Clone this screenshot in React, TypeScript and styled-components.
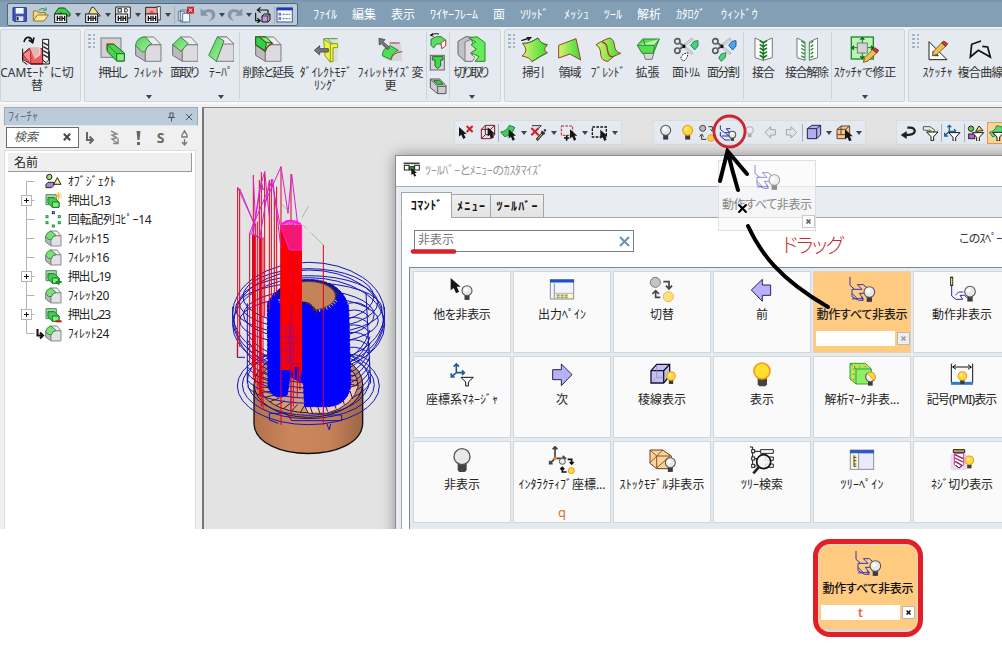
import React from 'react';
import styled, { createGlobalStyle } from 'styled-components';

const Global = createGlobalStyle`
  * { box-sizing: border-box; }
  body { margin: 0; background: #fff; overflow: hidden;
    font-family: "Noto Sans", "Noto Sans CJK JP", sans-serif; font-size: 12px; color: #222; }
  svg { display: block; flex: none; }
`;

/* ---------- text ---------- */
const isHalfKana = (c: string) => c >= '\uff61' && c <= '\uff9f';
const isHiragana = (c: string) => c >= '\u3041' && c <= '\u309f';
const advance = (c: string) =>
  isHalfKana(c) ? 0.5 : c === '.' ? 0.27 : c < '\u0100' ? 0.58 : isHiragana(c) ? 0.88 : 1;
const natural = (t: string, size: number) => [...t].reduce((n, c) => n + advance(c) * size, 0);

const TextSpan = styled.span<{ $ls: number; $size: number }>`
  display: block;
  white-space: pre;
  font-size: ${(p) => p.$size}px;
  font-feature-settings: "palt";
  letter-spacing: ${(p) => p.$ls}px;
  margin-right: ${(p) => -p.$ls}px;
  line-height: 13px;
`;
const Txt = ({ t, w, size = 12 }: { t: string; w?: number; size?: number }) => {
  const ls = w ? (w - natural(t, size)) / Math.max(1, t.length - 1) : 0;
  return <TextSpan $size={size} $ls={Math.round(ls * 100) / 100}>{t}</TextSpan>;
};

/* ---------- icons: drawn on a grid of three units per pixel ---------- */
type Box = [number, number, number, number];
const G = ({ v, children }: { v: Box; children: React.ReactNode }) => (
  <svg width={v[2] / 3} height={v[3] / 3} viewBox={v.join(' ')} fill="none" stroke="#222" strokeWidth={3}>
    {children}
  </svg>
);
const Bulb = ({ x, y, r = 15, lit, stroke }: { x: number; y: number; r?: number; lit?: boolean; stroke?: string }) => (
  <g>
    <rect x={x - r * 0.5} y={y + r * 0.8} width={r} height={r * 1.05} fill="#3c3c3c" stroke="none" />
    <circle cx={x} cy={y} r={r} fill={lit ? '#ffd83c' : '#e9e9ea'} stroke={stroke || (lit ? '#ee9a28' : '#555')} strokeWidth={3.2} />
    <circle cx={x - r * 0.25} cy={y - r * 0.25} r={r * 0.4} fill={lit ? '#ffec70' : '#fff'} stroke="none" />
  </g>
);
const Cursor = ({ x, y, s = 1 }: { x: number; y: number; s?: number }) => (
  <path transform={`translate(${x} ${y}) scale(${s})`} d="M0 0V32L8 26L14 40L22 36L16 23H26Z" fill="#161616" stroke="none" />
);
const DownArrow = () => (
  <svg width="6" height="4" viewBox="0 0 6 4"><path d="M0 0H6L3 4Z" fill="#3a4652" /></svg>
);
const Funnel = ({ x, y }: { x: number; y: number }) => (
  <path d={`M${x} ${y}h34l-13 14v12h-8v-12Z`} fill="#fff" stroke="#111" />
);
const Nc = () => (
  <g>
    <rect x="2" y="24" width="36" height="26" fill="#fff" stroke="#111" />
    <path d="M10 29v16M10 37h8M18 29v16M24 29v16M24 37h8M32 29v16" stroke="#111" strokeWidth="4" />
  </g>
);
const Motion = ({ ghost }: { ghost?: boolean }) => (
  <G v={[0, 0, 84, 84]}>
    <g opacity={ghost ? 0.55 : 1}>
      <path d="M6 3V28L20 40M20 40L12 40V52L28 68L12 69M20 40H42L28 26H46L60 38M28 68H46L34 52H50M12 52V62L32 73H46L40 62" stroke="#3535b4" strokeWidth="3" />
      <Bulb x={64} y={48} r={16} />
    </g>
  </G>
);
const MotionSmall = () => (
  <G v={[0, 0, 54, 54]}>
    <path d="M4 4V16L16 26M4 24V36L18 48H32M16 26H32L22 14H34M8 36H30L20 28" stroke="#2929a6" />
    <Bulb x={40} y={32} r={10} />
  </G>
);
const SolidCube = ({ kind }: { kind: 'fillet' | 'chamfer' | 'taper' | 'remove' }) => (
  <G v={[0, 0, 80, 80]}>
    <defs>
      <linearGradient id={`cube${kind}`} x1="0" y1="0" x2="1" y2="1"><stop offset="0" stopColor="#52cf58" /><stop offset="1" stopColor="#a6f29c" /></linearGradient>
    </defs>
    {kind === 'taper' ? (
      <>
        <path d="M28 3H56L78 24V76H24L46 22Z" fill="#dddbdf" stroke="#7b7d81" />
        <path d="M28 3H56L78 24H46Z" fill="#ededef" stroke="#7b7d81" />
        <path d="M28 3L48 14L25 76L2 58Z" fill="url(#cubetaper)" stroke="#3a8a46" />
      </>
    ) : (
      <>
        <path d="M2 26L31 46V76L2 58Z" fill="#bcbabe" stroke="#6c6e72" />
        <path d="M31 46L36 33L48 26H78V76H31Z" fill="#dddbdf" stroke="#7b7d81" />
        <path d="M26 3H56L78 26H48Z" fill="#ededef" stroke="#7b7d81" />
        {kind === 'fillet' && <path d="M2 29Q4 7 24 3H32L50 24Q34 28 31 46L22 48Z" fill="url(#cubefillet)" stroke="#36884a" />}
        {kind === 'chamfer' && <path d="M2 26L26 3L48 22L27 46Z" fill="url(#cubechamfer)" stroke="#36884a" />}
        {kind === 'remove' && (
          <>
            <path d="M2 3H28L52 22Q36 28 31 46L2 26Z" fill="#a6e89a" stroke="#8c3a28" strokeWidth="4" />
            <path d="M2 3H14L34 22L30 44L2 26Z" fill="#38cf42" stroke="#1c5a22" />
            <path d="M14 3H34L50 20H34Z" fill="#80ea78" stroke="#1c5a22" />
          </>
        )}
      </>
    )}
  </G>
);
const Extrude = () => (
  <G v={[0, 0, 76, 76]}>
    <rect x="3" y="3" width="60" height="58" fill="#d3d1d5" stroke="#7d7f85" />
    <path d="M20 40V20H42" stroke="#ef5a42" />
    <path d="M22 22H42L73 48V72H50L22 44Z" fill="#4ad44a" stroke="#1c6a24" />
    <path d="M50 50H73V72H50Z" fill="#86f080" stroke="#1c6a24" />
    <path d="M22 22L50 50" stroke="#1c6a24" strokeWidth="2" />
  </G>
);
const CamSwitch = () => (
  <G v={[66, 98, 90, 94]}>
    <path d="M68 158L86 142H128V188H92L68 174Z" fill="#f4595c" stroke="#7c1f28" />
    <path d="M68 158L92 188V144Z" fill="#fb8f90" stroke="#a2333b" />
    <path d="M88 136H120V160L104 172" fill="#e3b7b4" stroke="#eee" />
    <path d="M68 142V180L82 190M148 150V188H92" stroke="#111" />
    <path d="M128 114H146V176L138 184L128 176Z" fill="#f8f8f8" stroke="#111" />
    <path d="M130 124l14 8M130 136l14 8M130 148l14 8M130 160l14 8" stroke="#222" strokeWidth="4" />
    <path d="M72 122C76 104 92 104 96 118M86 116L98 124L102 108" stroke="#111" strokeWidth="5" />
  </G>
);
const DirectModel = () => (
  <G v={[252, 106, 78, 78]}>
    <path d="M286 114L300 110H326V182H302L288 160Z" fill="#deded9" stroke="none" />
    <path d="M284 112L304 126V182L288 162ZM304 126H326V138H312V180H302" fill="#edf24b" stroke="#86a00c" />
    <path d="M284 111H326M296 112L310 126" stroke="#3fa834" />
    <path d="M256 146L272 132V141H298V151H272V160Z" fill="#777" stroke="#555" />
  </G>
);
const FilletSize = () => (
  <G v={[445, 110, 78, 76]}>
    <path d="M462 144L486 126H512L518 182H478L458 170Z" fill="#d6d5d8" stroke="none" />
    <path d="M458 166Q458 144 482 136L506 150Q488 156 484 178Z" fill="#4fdc57" stroke="#2c8838" />
    <path d="M484 178Q488 156 518 154M480 128H510" stroke="#8c4030" />
    <path d="M448 114L466 118L460 124L480 142L474 148L455 130L449 134Z" fill="#777" stroke="#555" />
  </G>
);
const Ring = () => (
  <G v={[600, 96, 52, 52]}>
    <path d="M606 118L622 110H636L650 120V136L640 146L636 132H622L614 144L606 136Z" fill="#5edd62" stroke="#1e8433" />
    <path d="M636 128L650 120V138L638 146Z" fill="#fff" stroke="#d33a35" />
    <path d="M604 106Q618 98 630 102M612 100L604 106L614 109" stroke="#111" />
  </G>
);
const Hole = () => (
  <G v={[602, 166, 52, 52]}>
    <rect x="606" y="170" width="42" height="44" fill="#d4d3d6" stroke="#66696c" />
    <path d="M612 174H644V184H637V202L628 210L620 202V184H612Z" fill="#4ad44f" stroke="#167127" />
  </G>
);
const Pocket = () => (
  <G v={[600, 236, 54, 54]}>
    <path d="M604 242H632L651 262V286H626L604 268Z" fill="#cccbd0" stroke="#54565b" />
    <path d="M604 242L626 264H651M626 264V286" stroke="#54565b" />
    <path d="M614 247H632L642 258H626Z" fill="#45cc4a" stroke="#1c7426" />
  </G>
);
const Cut = () => (
  <G v={[682, 108, 88, 80]}>
    <path d="M685 124L708 110L728 112V184H706L685 164Z" fill="#c2c1c5" stroke="#64666a" />
    <path d="M706 126L724 118L740 150L722 160L736 172L728 184H706Z" fill="#dfdde1" stroke="#7c7e82" />
    <path d="M718 114L742 110L766 128V184H736L748 170L724 158L740 148L724 134L738 126Z" fill="#66ec58" stroke="#26882e" />
  </G>
);
const Surf = ({ kind }: { kind: 'sweep' | 'region' | 'blend' | 'extend' }) => (
  <G v={[0, 0, 84, 80]}>
    <defs>
      <linearGradient id={`g${kind}`}><stop offset="0" stopColor="#d4f36c" /><stop offset="1" stopColor="#3ddc37" /></linearGradient>
    </defs>
    {kind === 'sweep' && (<><path d="M8 22Q26 24 54 6Q62 24 82 26Q66 44 82 50Q62 60 36 77Q30 64 6 60Q28 46 8 22Z" fill="url(#gsweep)" stroke="#a13c2e" /><path d="M8 22Q26 24 54 6Q62 24 82 26M82 50Q62 60 36 77" stroke="#2e8744" /><path d="M4 14L26 7M20 5L32 5L24 14" stroke="#111" strokeWidth="4" /></>)}
    {kind === 'region' && <path d="M8 28L60 8L74 72L42 54L8 66Z" fill="url(#gregion)" stroke="#a13c2e" />}
    {kind === 'blend' && (<><path d="M6 26Q28 12 46 6Q60 8 62 32Q64 48 80 52Q58 58 42 76Q22 76 20 54Q20 34 6 26Z" fill="url(#gblend)" stroke="#a13c2e" /><path d="M24 18Q40 22 40 40Q44 68 60 60" stroke="#a13c2e" strokeWidth="4" /></>)}
    {kind === 'extend' && (<><path d="M28 50H60L54 70H34Z" fill="#d6d6d6" stroke="#77797b" /><path d="M10 28L26 9H76L58 52H24Z" fill="#56dd50" stroke="#2c8834" /><path d="M10 28H62L76 9M28 12L34 28M62 28L58 50" fill="#b1f59f" stroke="#2c8834" /></>)}
  </G>
);
const Scissors = ({ split }: { split?: boolean }) => (
  <G v={[0, 0, 84, 80]}>
    <circle cx="16" cy="16" r="8" stroke="#55575c" strokeWidth="5" />
    <circle cx="16" cy="44" r="8" stroke="#55575c" strokeWidth="5" />
    <path d="M22 20L62 54M22 40L62 8" stroke="#aeb0b5" strokeWidth="8" />
    <path d="M24 22L60 53M24 39L60 10" stroke="#dcdde0" strokeWidth="4" />
    <path d="M22 20L36 31M22 40L36 30" stroke="#55575c" strokeWidth="5" />
    <path d="M32 26h8v10h-8Z" fill="#111" stroke="none" />
    <path d="M56 28L66 16L78 14V30L68 42Z" fill={split ? '#4ba4ee' : '#46d37e'} stroke={split ? '#225fa6' : '#238650'} />
    <path d="M26 66L34 54L48 50L46 64L34 76Z" fill={split ? '#4cd482' : '#fff'} stroke={split ? '#238650' : '#111'} strokeDasharray={split ? undefined : '5 4'} />
  </G>
);
const Stitch = ({ split }: { split?: boolean }) => (
  <G v={[0, 0, split ? 68 : 58, 74]}>
    {split ? (
      <><path d="M3 3L27 15V70L3 62ZM65 3L40 15V70L65 62Z" fill="#fdfdfd" stroke="#777" />
        {[18, 29, 40, 51, 62].map((y) => <path key={y} d={`M16 ${y - 6}L24 ${y}M52 ${y - 6}L44 ${y}`} stroke="#1e8e2e" strokeWidth="4" />)}
        <path d="M26 16V70M41 16V70" stroke="#36a947" strokeDasharray="6 4" /></>
    ) : (
      <><path d="M3 3L28 15V70L3 62ZM55 3L28 15V70L55 62Z" fill="#fdfdfd" stroke="#777" />
        {[18, 29, 40, 51, 62].map((y) => <path key={y} d={`M17 ${y - 7}L28 ${y}L39 ${y - 7}`} stroke="#157c25" strokeWidth="5" />)}
        <path d="M28 16V70" stroke="#157c25" /></>
    )}
  </G>
);
const Pencil = ({ x, y }: { x: number; y: number }) => (
  <g transform={`translate(${x} ${y})`}>
    <path d="M0 44L4 30L30 4L42 14L14 40Z" fill="#f2bd52" stroke="#80622c" />
    <path d="M28 6L34 0L46 8L40 16Z" fill="#cf3a35" stroke="#7d2a2c" />
  </g>
);
const SketchFix = () => (
  <G v={[337, 110, 90, 86]}>
    <rect x="341" y="116" width="66" height="66" fill="#b8f6b2" stroke="#1c8b2b" strokeWidth="4" />
    <path d="M374 118V180M343 148H406" stroke="#157a22" />
    <path d="M368 124L374 118L380 124M368 174L374 180L380 174M349 142L343 148L349 154M400 142L406 148L400 154" stroke="#0e5c19" strokeWidth="4" />
    <rect x="359" y="134" width="30" height="30" fill="#d4d3d6" stroke="#77797d" />
    <Pencil x={377} y={148} />
  </G>
);
const Sketcher = () => (
  <G v={[566, 116, 66, 66]}>
    <path d="M572 124V178H626Z" fill="#fff" stroke="#222" /><path d="M584 152V166H600Z" stroke="#222" />
    <Pencil x={582} y={122} />
  </G>
);
const Composite = () => (
  <G v={[688, 116, 70, 62]}><path d="M724 122L696 132L692 170L716 150L752 170L744 140L728 138" stroke="#111" strokeWidth="5" /></G>
);

/* quick access icons */
const Save = () => (
  <G v={[34, 26, 46, 46]}><path d="M37 28H77V69H40L37 66Z" fill="#3c54b8" stroke="#23377f" /><path d="M45 29H69V46H45Z" fill="#f4f7ff" stroke="none" /><path d="M47 54H68V68H47Z" fill="#dfe5f5" stroke="none" /><path d="M51 56v10" strokeWidth="5" /></G>
);
const Open = () => (
  <G v={[94, 24, 52, 46]}><path d="M98 64V36H110L114 41H134V48" fill="#f5d984" stroke="#98752c" /><path d="M98 66L110 48H143L130 66Z" fill="#ffe9a0" stroke="#98752c" /><path d="M114 34Q124 24 134 31M128 34L137 33L135 25" stroke="#2f9740" /></G>
);
const NcA = () => <G v={[0, 0, 50, 52]}><path d="M4 20L14 6H32L48 22V30H30L22 20L4 30Z" fill="#38d23c" stroke="#124c1b" /><Nc /></G>;
const NcB = () => <G v={[0, 0, 50, 52]}><path d="M10 26L20 4H26L46 30H10Z" fill="#f8df8b" stroke="#333" /><Nc /></G>;
const NcC = () => <G v={[0, 0, 50, 52]}><path d="M2 3H46V36H2Z" fill="#fdfdfd" stroke="#222" /><rect x="9" y="8" width="10" height="10" /><path d="M29 8h6q6 5 0 10h-6Z" /><Nc /></G>;
const NcD = () => <G v={[0, 0, 50, 52]}><path d="M2 4H38V30H2Z" fill="#f1a3a1" stroke="#222" /><path d="M4 28L20 12L36 28" fill="#d86466" stroke="none" /><path d="M36 2H46V42H38Z" fill="#fff" stroke="#444" /><Nc /></G>;
const CloseAll = () => (
  <G v={[528, 22, 54, 50]}><path d="M532 38H550V66H532ZM538 34H556V70H538Z" fill="#dbe3ec" stroke="#5f7d9c" /><path d="M545 44H566V70H545Z" fill="#f5f9fd" stroke="#5f7d9c" /><rect x="558" y="24" width="21" height="21" fill="#ca2630" stroke="none" /><path d="M563 29l11 11M574 29l-11 11" stroke="#fff" /></G>
);
const Undo = ({ flip }: { flip?: boolean }) => (
  <G v={[0, 0, 48, 46]}><g transform={flip ? 'translate(48 0) scale(-1 1)' : undefined}><path d="M2 4V26H24L17 18Q34 10 36 26Q36 36 24 43Q48 38 46 20Q39 -1 10 11Z" fill="#8795a4" stroke="none" /></g></G>
);
const SwapCube = () => (
  <G v={[760, 22, 52, 50]}><path d="M770 34H802M780 26L770 34L780 42M802 34V44M765 42V66H778M770 59L779 66L770 73" stroke="#111" strokeWidth="3.5" /><path d="M784 52L791 46H808V64L802 70H784Z" fill="#c49bd3" stroke="#111" /><path d="M784 52H801V70M801 52L808 46" stroke="#111" strokeWidth="2" /></G>
);
const ListWin = () => (
  <G v={[830, 22, 52, 48]}><rect x="833" y="25" width="46" height="42" fill="#f7fafe" stroke="#3c57a6" /><path d="M832 28H880" stroke="#1b3ab5" strokeWidth="8" /><path d="M850 44H873M850 57H873" stroke="#666" strokeDasharray="6 3" /><rect x="839" y="41" width="5" height="5" stroke="#5873a8" /><rect x="839" y="54" width="5" height="5" stroke="#5873a8" /></G>
);

/* viewport toolbar icons */
const ClearSel = () => <G v={[192, 44, 48, 50]}><Cursor x={195} y={53} s={0.9} /><path d="M218 50l18 18M236 50l-18 18" stroke="#cf2027" strokeWidth="6" /></G>;
const BoxSel = () => <G v={[256, 44, 48, 50]}><path d="M260 60H288V88H260ZM260 60L272 48H300V76L288 88M288 60L300 48M272 48V76H300M272 76L260 88" stroke="#7e1720" /><Cursor x={279} y={54} s={0.85} /></G>;
const FaceSel = () => <G v={[318, 42, 52, 52]}><path d="M320 66Q338 64 346 46L362 52Q356 76 332 80Z" fill="#41cb62" stroke="#1e8739" /><Cursor x={344} y={58} s={0.85} /></G>;
const PickSel = () => <G v={[408, 42, 54, 52]}><path d="M414 47H442L428 60" stroke="#333" /><path d="M412 54l22 22M434 54l-22 22" stroke="#cf2027" strokeWidth="6" /><path d="M428 90L446 70" stroke="#222" strokeWidth="8" /><path d="M430 88L444 72" stroke="#e6e16a" /><path d="M442 64l10 8M450 62l6 -2" stroke="#333" strokeWidth="7" /></G>;
const AddSel = () => <G v={[498, 44, 54, 50]}><path d="M502 50H536V78H502Z" stroke="#b92026" strokeDasharray="8 4" /><path d="M518 78v16M510 86h16" stroke="#111" strokeWidth="5" /><Cursor x={528} y={60} s={0.85} /></G>;
const RectSel = () => <G v={[588, 46, 52, 48]}><path d="M592 52H634V82H592Z" stroke="#111" strokeDasharray="8 4" strokeWidth="4" /><Cursor x={616} y={60} s={0.85} /></G>;
const BulbIcon = ({ lit, dim }: { lit?: boolean; dim?: boolean }) => <G v={[0, 0, 40, 54]}><g opacity={dim ? 0.35 : 1}><Bulb x={20} y={19} r={dim ? 11 : 15} lit={lit} /></g></G>;
const SwapBulb = () => <G v={[0, 0, 50, 54]}><circle cx="11" cy="13" r="9" fill="#bbb" stroke="#444" /><circle cx="36" cy="42" r="10" fill="#ffd24a" stroke="#ee9a28" /><path d="M28 8H40V20M34 16L40 22L46 16M22 46H8V34M2 38L8 30L14 38" stroke="#333" /></G>;
const GrayArrow = ({ right }: { right?: boolean }) => <G v={[0, 0, 38, 44]}><g transform={right ? 'translate(38 0) scale(-1 1)' : undefined}><path d="M3 22L20 5V14H34V30H20V39Z" fill="#e2e6ea" stroke="#a0a6ac" /></g></G>;
const BlueCube = () => <G v={[498, 44, 50, 50]}><path d="M502 58L516 48H542V76L530 88H502Z" fill="#b4adf2" stroke="#222249" /><path d="M502 58H530V88M530 58L542 48" stroke="#222249" /></G>;
const PickCube = () => <G v={[584, 42, 54, 52]}><path d="M590 58L602 48H628V74L616 86H590Z" fill="#f2c698" stroke="#6a4422" /><path d="M590 58H616V86M616 58L628 48M602 48V74H590M602 74H628" stroke="#6a4422" /><Cursor x={614} y={58} s={0.9} /></G>;
const Rotate = () => <G v={[786, 46, 50, 44]}><path d="M808 54H818Q832 56 830 66Q828 76 800 76" stroke="#222" strokeWidth="7" /><path d="M788 76L806 64V88Z" fill="#222" stroke="none" /></G>;
const FilterFace = () => <G v={[846, 42, 54, 52]}><path d="M850 60V50H870L884 60L878 70Q864 58 850 60Z" fill="#f6efcf" stroke="#555" /><Funnel x={860} y={66} /><path d="M866 58l10 6" stroke="#2b8f3f" /></G>;
const FilterAxis = () => <G v={[916, 42, 54, 52]}><path d="M932 46V64H952M932 64L920 76M926 52L932 46L938 52M946 58L952 64M918 68V78H928" stroke="#215e9c" strokeWidth="4" /><Funnel x={930} y={68} /></G>;
const FilterObj = () => <G v={[984, 42, 54, 52]}><circle cx="996" cy="56" r="8" fill="#63d33c" stroke="#222" /><path d="M1010 64L1020 48L1032 62Z" fill="#f4d94a" stroke="#222" /><rect x="989" y="72" width="18" height="14" fill="#c160d1" stroke="#222" /><Funnel x={1000} y={68} /></G>;
const FilterSel = () => <G v={[1046, 44, 48, 50]}><path d="M1050 66Q1066 64 1072 46L1090 50V66L1060 80Z" fill="#59d870" stroke="#20913d" /><Funnel x={1060} y={66} /></G>;

/* tree icons */
const TreeIcon = ({ kind }: { kind: string }) => (
  <G v={[0, 0, 50, 50]}>
    {kind === 'obj' && (<><circle cx="13" cy="12" r="8" fill="#9bdf6e" stroke="#222" /><path d="M26 34L37 14L48 34Z" fill="#f6ea8e" stroke="#222" /><path d="M3 34L9 28H26V38L20 44H3Z" fill="#a787cd" stroke="#222" /></>)}
    {kind === 'fillet' && (<><path d="M2 18L18 28V48L2 36Z" fill="#b9b8bc" stroke="#7b7d81" /><path d="M18 30L24 20L34 17H48V48H18Z" fill="#e2e1e5" stroke="#8a8c90" /><path d="M16 3H36L48 17H32Z" fill="#efeff1" stroke="#8a8c90" /><path d="M2 20Q4 6 18 3L33 16Q22 18 19 29Q10 32 2 20Z" fill="#7be078" stroke="#3b9148" /></>)}
    {kind.startsWith('ext') && (<><path d="M3 8H34V38H3Z" fill="#a9d6b0" stroke="#4f8b57" /><path d="M9 17H28L42 30V46H22L9 32Z" fill="#42cd4b" stroke="#1c7a2a" /><path d="M22 30H42V46H22Z" fill="#7fee7f" stroke="#1c7a2a" /></>)}
    {kind === 'ext*' && <path d="M40 0v24M28 12h22M32 4l16 16M48 4l-16 16" stroke="#f0b840" />}
    {kind === 'ext+' && <path d="M41 33v17M32 42h18" stroke="#1c8d2b" strokeWidth="6" />}
    {kind === 'ext-' && <path d="M32 46h18" stroke="#bf1c1c" strokeWidth="6" />}
    {kind === 'pattern' && (<><rect x="22" y="2" width="6" height="6" stroke="#1a1a9a" />{[[3, 14], [40, 14], [3, 32], [40, 32], [22, 42]].map(([x, y]) => <rect key={`${x}${y}`} x={x} y={y} width="6" height="6" fill="#bdf0bf" stroke="#18923a" />)}</>)}
  </G>
);

/* command icons (28px) */
const commandIcons: Record<string, React.ReactNode> = {
  others: <G v={[146, 32, 84, 84]}><Cursor x={154} y={38} s={1.15} /><Bulb x={203} y={76} r={15} /></G>,
  output: <G v={[444, 32, 84, 84]}><rect x="451" y="43" width="70" height="58" fill="#f2f4fd" stroke="#8c8ea8" /><path d="M450 47H522" stroke="#1c50c6" strokeWidth="9" /><path d="M463 54V100" stroke="#8c8ea8" /><path d="M464 84H520V100H464Z" fill="#fdf9bf" stroke="#999" strokeWidth="2" /><path d="M470 89.500H504M470 95.500H504" strokeWidth="2" strokeDasharray="9 3" /></G>,
  toggle: <G v={[743, 32, 84, 84]}><circle cx="765" cy="51" r="15" fill="#c4c4c4" stroke="#777" /><circle cx="804" cy="94" r="15" fill="#ffe07a" stroke="#edb14d" /><path d="M789 49H806V68M797 61L806 71L815 61M780 96H766V80M756 86L766 76L776 86" stroke="#444" strokeWidth="5" /></G>,
  prev: <G v={[144, 30, 84, 84]}><path d="M154 72L187 40V57H212V88H187V106Z" fill="#b8b0f8" stroke="#26264d" /></G>,
  motionall: <Motion />,
  motion: <G v={[742, 32, 84, 84]}><path d="M753 34V62" stroke="#222" strokeWidth="9" /><path d="M753 38V58" stroke="#e7de5a" strokeWidth="4" /><path d="M753 62V92L766 102H786L778 90H792L800 98M764 90L774 80H788" stroke="#2b2ba2" /><Bulb x={808} y={79} r={16} /></G>,
  csys: <G v={[144, 286, 84, 84]}><path d="M169 298V321H192M169 321L156 332M161 303L169 295L177 303M186 314L193 321L186 328M154 323V334H164" stroke="#205d96" strokeWidth="5" /><path d="M183 335H220L205 349V361H197V349Z" fill="#fff" stroke="#111" /></G>,
  next: <G v={[446, 287, 84, 84]}><path d="M518 328L486 296V313H460V343H486V361Z" fill="#b8b0f8" stroke="#26264d" /></G>,
  edges: <G v={[746, 286, 84, 84]}><path d="M755 315L772 296H811V330L793 352H755Z" fill="#c6c0f2" stroke="#15152c" strokeWidth="4" /><path d="M755 315H793V352M793 315L811 296" stroke="#15152c" strokeWidth="4" /><path d="M772 300V336L760 348M772 336H792" stroke="#8a86b8" strokeWidth="2" /><Bulb x={815} y={331} r={13} lit /></G>,
  show: <G v={[146, 286, 84, 84]}><path d="M175 336H203V356L198 362H180L175 356Z" fill="#444" stroke="none" /><circle cx="188" cy="316" r="24" fill="#ffe02b" stroke="#f29a26" strokeWidth="5" /></G>,
  mark: <G v={[442, 286, 84, 84]}><path d="M448 293H494L512 310V355H466L448 340Z" fill="#8df062" stroke="#3a9b38" /><path d="M448 293L466 310H512M466 310V355" stroke="#3a9b38" /><path d="M457 300V345M462 302H505" stroke="#e6e03b" strokeWidth="6" strokeDasharray="9 5" /><path d="M460 303H500M459 308V345" stroke="#d24b4b" strokeDasharray="4 12" /><Bulb x={509} y={334} r={14} /><path d="M500 324A14 14 0 0 1 520 344Z" fill="#ffd83c" stroke="#ee9a28" /></G>,
  pmi: <G v={[744, 286, 84, 84]}><path d="M754 294V352M818 294V352M758 304H814M768 297L758 304L768 311M804 297L814 304L804 311" stroke="#111" /><path d="M753 353H819" stroke="#2e7bcb" strokeWidth="9" /><Bulb x={787} y={331} r={13} lit /></G>,
  hide: <G v={[145, 540, 84, 84]}><path d="M174 592H201V612L196 618H179L174 612Z" fill="#444" stroke="none" /><circle cx="187" cy="572" r="24" fill="#e8e8e8" stroke="#555" strokeWidth="4" /></G>,
  inter: <G v={[444, 540, 84, 84]}><path d="M465 545V577H495M465 577L450 592M458 550L465 542L472 550M488 570L496 577L488 584M449 584V593H458" stroke="#444" strokeWidth="5" /><circle cx="465" cy="577" r="5" fill="#f28420" stroke="none" /><circle cx="487" cy="586" r="9" fill="#eee" stroke="#555" /><circle cx="514" cy="614" r="9" fill="#ffd935" stroke="#e79722" /><path d="M503 580H515V592M509 588L515 594L521 588M500 618H487V606M481 610L487 604L493 610" stroke="#111" strokeWidth="5" /></G>,
  stock: <G v={[742, 540, 84, 84]}><path d="M748 552H786L812 570V608H768L748 592Z" fill="#fbd49a" stroke="#6b3e1e" /><path d="M748 552L768 570H810M768 570V608M748 590L786 552M768 606L808 570" stroke="#8a5529" /><Bulb x={809} y={590} r={15} /></G>,
  search: <G v={[144, 540, 84, 84]}><path d="M150 543H158V606M158 556H180M158 578H174M158 600H170" stroke="#111" /><path d="M182 551H220V562H182ZM196 573H220V583H196ZM196 594H220V604H196Z" fill="#fff" stroke="#222" /><rect x="155" y="551" width="9" height="9" fill="#fff" /><rect x="155" y="573" width="9" height="9" fill="#fff" /><rect x="155" y="595" width="9" height="9" fill="#fff" /><circle cx="191" cy="587" r="21" fill="#f4f4f4" fillOpacity=".85" stroke="#111" strokeWidth="5" /><path d="M178 602L160 622" stroke="#222" strokeWidth="8" /></G>,
  treepane: <G v={[444, 540, 84, 84]}><rect x="451" y="552" width="70" height="58" fill="#e9ebfb" stroke="#8c8ea8" /><path d="M450 557H522" stroke="#2c5cc4" strokeWidth="10" /><path d="M453 563H474V608H453Z" fill="#fbf6c6" stroke="none" /><path d="M476 563V610" stroke="#8c8ea8" /><path d="M462 568V602M462 574h7M462 584h7M462 594h7M462 601h7" stroke="#222" strokeWidth="2.5" /></G>,
  thread: <G v={[742, 540, 84, 84]}><rect x="750" y="564" width="48" height="48" fill="#ecd9ec" stroke="none" /><path d="M758 551H792V560H758Z" fill="#bca53b" stroke="#222" /><path d="M761 562H789V596L775 606L761 596Z" fill="#fff" stroke="#cc2fa4" /><path d="M763 566L787 578M763 576L787 588M763 586L784 598" stroke="#8c1d64" strokeWidth="4" /><path d="M766 598L775 606L784 598" stroke="#333" /><Bulb x={806} y={583} r={13} lit /></G>,
};

/* ---------- title bar ---------- */
const Window = styled.div`
  width: 1002px; height: 529px; overflow: hidden; display: flex; flex-direction: column; background: #f0f0f0;
`;
const TitleBar = styled.header`
  height: 27px; flex: none; display: flex; align-items: center; background: #829fb6;
  border-top: 2px solid #7b96ac; padding-left: 7px; color: #fff;
`;
const QuickBar = styled.div`
  width: 291px; height: 23px; display: flex; align-items: center; padding-left: 2px;
  background: #bdcbd9; border: 1px solid #50667c; border-radius: 2px; margin-right: 15px;
`;
const Slot = styled.div<{ $w: number }>`
  width: ${(p) => p.$w}px; flex: none; display: flex; align-items: center; justify-content: center;
`;
const Rule = styled.i<{ $h: number }>`
  width: 1px; height: ${(p) => p.$h}px; background: #a4b1bd; flex: none;
`;
const MenuItem = styled.span<{ $w: number }>`
  width: ${(p) => p.$w}px; flex: none; white-space: nowrap; line-height: 13px; display: flex;
`;
const quick: [React.ReactNode, number][] = [
  [<Save />, 19], [<Open />, 23], [<NcA />, 21], [<DownArrow />, 10], [<NcB />, 20], [<DownArrow />, 10], [<NcC />, 20], [<DownArrow />, 10],
  [<NcD />, 20], [<DownArrow />, 10], [<Rule $h={18} />, 3], [<CloseAll />, 20], [<Undo />, 23], [<DownArrow />, 6], [<Undo flip />, 20], [<DownArrow />, 7],
  [<SwapCube />, 21], [<Rule $h={18} />, 2], [<ListWin />, 19],
];
const menus: [string, number, number][] = [
  ['ﾌｧｲﾙ', 24, 39], ['編集', 24, 39], ['表示', 24, 39], ['ﾜｲﾔｰﾌﾚｰﾑ', 48, 63], ['面', 12, 27], ['ｿﾘｯﾄﾞ', 28, 44],
  ['ﾒｯｼｭ', 25, 40], ['ﾂｰﾙ', 18, 33], ['解析', 24, 39], ['ｶﾀﾛｸﾞ', 29, 45], ['ｳｨﾝﾄﾞｳ', 37, 60],
];

/* ---------- ribbon ---------- */
const Ribbon = styled.div`
  height: 77px; flex: none; display: flex; gap: 3px; padding-top: 2px; background: #eef0f2; border-bottom: 2px solid #f8f8f8;
`;
const RibbonGroup = styled.section<{ $w: number }>`
  width: ${(p) => p.$w}px; flex: none; display: flex; align-items: stretch; overflow: hidden;
  background: #e4eaf0; border: 1px solid #d0d5d9; border-radius: 2px;
`;
const Grip = styled.i`
  width: 8px; height: 15px; margin: 3px 1px 0 2px; flex: none;
  background: radial-gradient(circle, #a3b4c4 1.1px, transparent 1.5px) 0 0 / 5px 4px;
`;
const ToolButton = styled.div<{ $w: number }>`
  width: ${(p) => p.$w}px; flex: none; display: flex; flex-direction: column; align-items: center; padding-top: 4px;
`;
const ToolIcon = styled.div`height: 31px; display: flex; align-items: center;`;
const ToolLabel = styled.div`display: flex; flex-direction: column; align-items: center; line-height: 13px; color: #333; margin-top: 1px;`;
const More = styled.div`margin-top: auto; padding-bottom: 2px;`;
const Divider = styled.i`width: 1px; margin: 2px 0; background: #cdd3d8; flex: none;`;
const SmallStack = styled.div`width: 22px; flex: none; display: flex; flex-direction: column; align-items: center; gap: 5px; padding-top: 2px;`;

const Tool = ({ w, icon, lines, more }: { w: number; icon: React.ReactNode; lines: [string, number][]; more?: boolean }) => (
  <ToolButton $w={w}>
    <ToolIcon>{icon}</ToolIcon>
    <ToolLabel>{lines.map(([t, n]) => <Txt key={t} t={t} w={n} />)}</ToolLabel>
    {more && <More><DownArrow /></More>}
  </ToolButton>
);

/* ---------- feature panel ---------- */
const Body = styled.main`flex: 1; display: flex; min-height: 0; padding-top: 3px;`;
const Side = styled.aside`
  width: 198px; margin-right: 4px; flex: none; padding-left: 4px; display: flex; flex-direction: column;
`;
const SideTitle = styled.div`
  height: 19px; flex: none; display: flex; align-items: center; padding: 0 4px 0 3px; background: #bccbd9;
  border: 1px solid #9fadba; border-bottom-color: #dfe5ea; color: #63707c; justify-content: space-between;
`;
const TitleTools = styled.div`display: flex; gap: 9px; align-items: center;`;
const SearchRow = styled.div`height: 23px; display: flex; align-items: center; padding-left: 2px; flex: none;`;
const FilterBox = styled.div`
  width: 73px; height: 21px; background: #fff; border: 1px solid #6c6c6c; display: flex; align-items: center;
  justify-content: space-between; padding: 0 7px 2px 7px; font-style: italic; color: #555;
`;
const StrongMark = styled.b`color: #6a6a6a;`;
const TreePanel = styled.div`
  flex: 1; background: #fff; border: 1px solid #ddd; border-bottom: 0; padding: 2px 3px; width: 192px; margin-top: 1px;
`;
const TreeHead = styled.div`
  height: 19px; background: #efefef; border-right: 1px solid #999; border-bottom: 1px solid #999; padding: 3px 6px; line-height: 13px;
`;
const TreeRow = styled.div`height: 19px; display: flex; align-items: center; color: #222;`;
const TreeLabel = styled.div`margin-left: 6px; display: flex;`;
const tree: [string, number, string, boolean][] = [
  ['ｵﾌﾞｼﾞｪｸﾄ', 48, 'obj', false], ['押出し13', 44, 'ext*', true], ['回転配列ｺﾋﾟｰ14', 84, 'pattern', false],
  ['ﾌｨﾚｯﾄ15', 42, 'fillet', false], ['ﾌｨﾚｯﾄ16', 42, 'fillet', false], ['押出し19', 44, 'ext+', true],
  ['ﾌｨﾚｯﾄ20', 42, 'fillet', false], ['押出し23', 44, 'ext-', true], ['ﾌｨﾚｯﾄ24', 42, 'fillet', false],
];
const Connector = ({ first, last, plus }: { first: boolean; last: boolean; plus: boolean }) => (
  <svg width="37" height="19" viewBox="0 0 37 19" fill="none" stroke="#b4b4b4">
    <path d={`M18.5 ${first ? 9.5 : 0}V${last ? 9.5 : 19}M18.5 9.5H26.5`} />
    {plus && <><rect x="13.5" y="4.5" width="10" height="10" fill="#fff" /><path d="M16 9.5H21M18.5 7V12" stroke="#111" /></>}
    {last && <path d="M29.5 5V11.5H34M32 8.5L35 11.5L32 14.5" stroke="#111" strokeWidth="2" />}
  </svg>
);

/* ---------- viewport ---------- */
const Viewport = styled.section`
  flex: 1; min-width: 0; position: relative; overflow: hidden; background: #e3e3e3;
  border-left: 2px solid #777; border-top: 1px solid #888;
`;
const ToolStrips = styled.div`display: flex; padding: 12px 0 0 250px;`;
const Strip = styled.div<{ $w: number; $gap: number }>`
  width: ${(p) => p.$w}px; height: 25px; flex: none; margin-right: ${(p) => p.$gap}px; display: flex; align-items: center;
  background: #e4eaf0; border: 1px solid #d6dde3; overflow: hidden;
`;
const Active = styled.div`background: #ffd29a; border: 1px solid #d99f58; padding: 2px 0; height: 22px;`;
const ModelLayer = styled.div`position: absolute; left: 6px; top: 42px;`;

const ring = (n: number) => Array.from({ length: n }, (_, i) => (i / n) * Math.PI * 2);
const Model = () => (
  <svg width="200" height="320" viewBox="0 0 600 960" fill="none" stroke="#1414b8" strokeWidth="3">
    <defs>
      <linearGradient id="base"><stop offset="0" stopColor="#b4734c" /><stop offset=".35" stopColor="#cb865c" /><stop offset=".7" stopColor="#c68259" /><stop offset="1" stopColor="#9d6647" /></linearGradient>
    </defs>
    <path d="M132 705V822C140 940 450 940 458 822V705Z" fill="url(#base)" stroke="#111" strokeWidth="4" />
    <ellipse cx="295" cy="702" rx="163" ry="100" fill="#c68562" stroke="#111" />
    <ellipse cx="295" cy="702" rx="148" ry="86" fill="#d69b7c" stroke="#2b1c18" />
    {ring(34).map((a) => <path key={a} d={`M${295 + 118 * Math.cos(a)} ${700 + 66 * Math.sin(a)}L${295 + 148 * Math.cos(a + 0.07)} ${702 + 86 * Math.sin(a + 0.07)}`} stroke="#33221c" />)}
    {[0, 1, 2, 3, 4].map((i) => <ellipse key={i} cx={295 + i * 0.5} cy={440 + i * 18} rx={196 + (i % 3) * 12} ry={84 - i * 3} />)}
    <ellipse cx="296" cy="490" rx="228" ry="153" /><ellipse cx="296" cy="510" rx="224" ry="150" /><ellipse cx="296" cy="525" rx="228" ry="142" />
    <path d="M68 470V520Q80 570 112 610M523 470V520Q514 570 478 610M112 460V700M468 430L482 700" />
    {[0, 1, 2, 3, 4, 5, 6, 7, 8].map((i) => <path key={i} d={`M112 ${550 + i * 20}Q150 ${620 + i * 17} 296 ${640 + i * 15}T480 ${540 + i * 20}`} />)}
    {[0, 1, 2, 3, 4, 5, 6, 7].map((i) => <path key={i} d={`M415 ${460 + i * 22}Q455 ${450 + i * 23} 478 ${480 + i * 22}`} />)}
    <ellipse cx="295" cy="708" rx="213" ry="116" /><ellipse cx="295" cy="704" rx="198" ry="102" /><ellipse cx="295" cy="692" rx="183" ry="104" />
    <path d="M178 790V810L205 820M178 790H230L245 812H395V795H350M350 820L358 840L362 822M82 580V622H105" />
    <path d="M283 765L345 768L418 712L446 705Q430 770 350 790H295Z" fill="#f3c8c4" stroke="#3d2925" />
    {[300, 322, 345, 370, 395, 420].map((x, i) => <path key={x} d={`M${x} ${768 - i * i * 1.8}l8 24`} stroke="#222" />)}
    <path d="M172 460Q210 392 295 388Q395 392 416 470L422 710Q410 768 350 770H284L280 700L240 680L232 735Q190 755 174 710Z" fill="#0000ff" stroke="#0000e8" strokeDasharray="10 3" />
    <ellipse cx="295" cy="438" rx="82" ry="44" fill="#c38459" stroke="#5b4130" strokeWidth="4" />
    {ring(44).map((a) => <path key={a} d={`M${295 + 82 * Math.cos(a)} ${438 + 44 * Math.sin(a)}L${295 + (91 + (a * 50) % 7) * Math.cos(a + 0.05)} ${438 + 51 * Math.sin(a + 0.05)}`} stroke={Math.sin(a) > 0.2 ? '#e7c5bd' : '#2a222c'} />)}
    <path d="M208 468Q290 440 310 476L318 500Q330 520 330 560H208Z" fill="#0000ff" stroke="none" />
    <path d="M240 460Q298 450 306 470Q320 476 318 500" stroke="#241c2c" strokeWidth="4" />
    <g stroke="#e0001a">
      <path d="M211 225H276V660L266 700V650H254V700L246 660H211Z" fill="#ff0000" stroke="none" />
      <path d="M83 112V622M89 116V590M119 250V640M130 75V690M136 220V700M142 215V720M148 90V735M154 66V770M159 262V780M164 65V500M178 90V480M184 88V450M193 130V440M200 110V430M213 50V825M243 72V810M250 220V770M262 225V740M270 230V720M340 285V825" />
      <path d="M128 255V650M133 255V680M151 260V740" strokeWidth="4" />
    </g>
    <path d="M228 525V650M220 540h40M218 560h44M220 580h44M218 600h40M220 620h44M218 640h44M238 520V640M252 530V650" stroke="#8a10a0" strokeWidth="2" />
    <path d="M213 600V740M243 470V790M340 500V800" stroke="#7010b0" strokeWidth="2" />
    <g stroke="#d321d3">
      <path d="M83 112L130 215L90 118M130 80L136 205L119 250L158 268L130 250L148 120L164 65L178 200M164 160L213 50L234 190L245 72L262 215M136 210L188 88L213 295M178 92L150 260M184 88L210 225M125 250L136 205L154 95L160 120L150 105" />
      <path d="M212 225L228 212L262 213L275 226V300H238L216 240Z" fill="#ff28b4" fillOpacity=".55" stroke="#ff20dc" />
      <path d="M220 225L240 300M235 218L248 300M250 216L262 300M262 220L240 300" strokeWidth="2" stroke="#d020b8" />
      <path d="M214 222L240 212L272 222" strokeWidth="7" stroke="#ff18e8" />
    </g>
    <path d="M276 203L296 168M303 248L340 285M212 160L243 190M280 226L290 236" stroke="#999" strokeWidth="2" />
  </svg>
);

/* ---------- customise dialog ---------- */
const Dialog = styled.div`
  position: absolute; left: 191px; top: 47px; width: 640px; height: 400px; background: #e9edf1;
  border: 1px solid #858a90; box-shadow: 0 0 13px rgba(0, 0, 0, 0.38); display: flex; flex-direction: column;
`;
const DialogTitle = styled.div`
  height: 31px; flex: none; background: #fff; border-bottom: 1px solid #a8afb5; display: flex; align-items: center;
  gap: 5px; padding: 0 7px 2px; color: #999;
`;
const Tabs = styled.div`display: flex; align-items: flex-end; padding: 4px 0 0 5px; height: 30px; flex: none;`;
const Tab = styled.div<{ $w: number; $on?: boolean }>`
  width: ${(p) => p.$w}px; height: ${(p) => (p.$on ? 26 : 24)}px; display: flex; align-items: center; justify-content: center;
  border: 1px solid #a1a6ab; border-bottom-color: ${(p) => (p.$on ? '#fff' : '#a1a6ab')};
  background: ${(p) => (p.$on ? '#fff' : 'linear-gradient(#f0f0f0, #e3e3e3)')}; color: #111; font-weight: 600;
  margin-left: ${(p) => (p.$on ? 0 : -1)}px; margin-bottom: -1px; z-index: 1;
`;
const TabPage = styled.div`flex: 1; margin-left: 5px; background: #fff; border: 1px solid #a1a6ab; padding: 12px 0 0 7px; display: flex; flex-direction: column;`;
const SearchLine = styled.div`display: flex; align-items: flex-start; height: 37px; flex: none; padding-left: 5px;`;
const SearchField = styled.div`
  width: 220px; height: 22px; border: 1px solid #777d83; background: #fff; display: flex; align-items: flex-start;
  justify-content: space-between; padding: 2px 3px; color: #777;
`;
const Note = styled.div`margin: 2px 0 0 325px; color: #333; display: flex;`;
const CommandGrid = styled.div`
  flex: 1; border-left: 1px solid #7f8a92; border-top: 1px solid #7f8a92; background: #e4eaee; padding: 3px 3px 0;
  display: grid; grid-template-columns: repeat(6, 98px); grid-auto-rows: 82px; gap: 3px 2px; align-content: start;
`;
const CommandCell = styled.div<{ $on?: boolean }>`
  background: ${(p) => (p.$on ? '#ffcb80' : '#fafafa')}; border: 1px solid ${(p) => (p.$on ? '#e6d0b0' : '#d0d7dc')};
  display: flex; flex-direction: column; align-items: center; color: #222; padding-top: 4px; overflow: hidden;
  font-weight: ${(p) => (p.$on ? 500 : 400)};
`;
const CommandLabel = styled.div`height: 20px; margin-top: 4px; display: flex;`;
const Shortcut = styled.div`color: #dc7226; line-height: 14px; margin-top: 7px; font-size: 13px;`;
const KeyRow = styled.div`display: flex; align-self: stretch; align-items: center; gap: 2px; padding: 3px 0 0 2px;`;
const KeyInput = styled.div`width: 79px; height: 15px; background: #fff; display: flex; align-items: center; justify-content: center; color: #e8652c; font-weight: 600;`;
const KeyClear = styled.div<{ $dim?: boolean }>`
  width: 13px; height: 13px; background: ${(p) => (p.$dim ? '#eee' : '#fff')}; border: 1px solid #b9b9b9;
  display: flex; align-items: center; justify-content: center; color: ${(p) => (p.$dim ? '#999' : '#111')};
`;
const Cross = ({ s = 5, color = 'currentColor', w = 1.5 }: { s?: number; color?: string; w?: number }) => (
  <svg width={s} height={s} viewBox="0 0 10 10"><path d="M1 1L9 9M9 1L1 9" stroke={color} strokeWidth={(w * 10) / s} /></svg>
);
const commands: [string, number, string, string?][] = [
  ['他を非表示', 57, 'others'], ['出力ﾍﾟｲﾝ', 48, 'output'], ['切替', 24, 'toggle'], ['前', 12, 'prev'], ['動作すべて非表示', 90, 'motionall'], ['動作非表示', 60, 'motion'],
  ['座標系ﾏﾈｰｼﾞｬ', 72, 'csys'], ['次', 12, 'next'], ['稜線表示', 48, 'edges'], ['表示', 24, 'show'], ['解析ﾏｰｸ非表...', 75, 'mark'], ['記号(PMI)表示', 76, 'pmi'],
  ['非表示', 36, 'hide'], ['ｲﾝﾀﾗｸﾃｨﾌﾞ座標...', 87, 'inter', 'q'], ['ｽﾄｯｸﾓﾃﾞﾙ非表示', 85, 'stock'], ['ﾂﾘｰ検索', 42, 'search'], ['ﾂﾘｰﾍﾟｲﾝ', 43, 'treepane'], ['ﾈｼﾞ切り表示', 62, 'thread'],
];

/* ---------- annotations ---------- */
const Markup = styled.div`position: absolute; left: 0; top: 0; pointer-events: none;`;
const Ghost = styled.div`
  position: absolute; left: 718px; top: 160px; width: 98px; height: 71px; background: rgba(250, 250, 250, 0.72);
  border: 1px solid #dedede; display: flex; flex-direction: column; align-items: center; color: #858585; padding-top: 3px;
`;
const GhostLabel = styled.div`height: 15px; margin-top: 6px; display: flex;`;
const GhostClear = styled.div`margin-left: auto; margin-top: 2px; opacity: 0.7;`;
const DragNote = styled.div`position: absolute; left: 782px; top: 239px; color: #bf2e34; font-weight: 300; display: flex;`;
const Callout = styled.div`
  width: 110px; height: 98px; margin: 10px 0 0 813px; border: 5px solid #e21f26; border-radius: 17px; background: #ddd8cf;
  padding: 1px 1px 3px; overflow: hidden; display: flex;
`;
const CalloutCell = styled.div`
  flex: 1; background: #ffcb80; border-radius: 11px 11px 0 0; display: flex; flex-direction: column; align-items: center; color: #111;
  padding-top: 5px; font-weight: 500;
`;
const Page = styled.div`position: relative; width: 1002px; height: 645px; overflow: hidden; background: #fff;`;

export default function App() {
  return (
    <Page>
      <Global />
      <Window>
        <TitleBar>
          <QuickBar>{quick.map(([icon, w], i) => <Slot key={i} $w={w}>{icon}</Slot>)}</QuickBar>
          {menus.map(([t, w, step]) => <MenuItem key={t} $w={step}><Txt t={t} w={w} /></MenuItem>)}
        </TitleBar>
        <Ribbon>
          <RibbonGroup $w={81}>
            <Tool w={72} icon={<CamSwitch />} lines={[['CAMﾓｰﾄﾞに切', 67], ['替', 12]]} />
          </RibbonGroup>
          <RibbonGroup $w={417}>
            <Grip />
            <Tool w={34} icon={<Extrude />} lines={[['押出し', 30]]} />
            <Tool w={37} icon={<SolidCube kind="fillet" />} lines={[['ﾌｨﾚｯﾄ', 30]]} more />
            <Tool w={36} icon={<SolidCube kind="chamfer" />} lines={[['面取り', 30]]} />
            <Tool w={36} icon={<SolidCube kind="taper" />} lines={[['ﾃｰﾊﾟ', 24]]} more />
            <Divider />
            <Tool w={57} icon={<SolidCube kind="remove" />} lines={[['削除と延長', 52]]} />
            <Tool w={58} icon={<DirectModel />} lines={[['ﾀﾞｲﾚｸﾄﾓﾃﾞ', 52], ['ﾘﾝｸﾞ', 24]]} />
            <Tool w={71} icon={<FilletSize />} lines={[['ﾌｨﾚｯﾄｻｲｽﾞ変', 66], ['更', 12]]} />
            <Divider />
            <SmallStack><Ring /><Hole /><Pocket /></SmallStack>
            <Divider />
            <Tool w={43} icon={<Cut />} lines={[['切り取り', 37]]} more />
          </RibbonGroup>
          <RibbonGroup $w={401}>
            <Grip />
            <Tool w={35} icon={<Surf kind="sweep" />} lines={[['掃引', 23]]} />
            <Tool w={38} icon={<Surf kind="region" />} lines={[['領域', 23]]} />
            <Tool w={38} icon={<Surf kind="blend" />} lines={[['ﾌﾞﾚﾝﾄﾞ', 34]]} />
            <Tool w={41} icon={<Surf kind="extend" />} lines={[['拡張', 24]]} />
            <Tool w={36} icon={<Scissors />} lines={[['面ﾄﾘﾑ', 28]]} />
            <Tool w={39} icon={<Scissors split />} lines={[['面分割', 33]]} />
            <Divider />
            <Tool w={39} icon={<Stitch />} lines={[['接合', 23]]} />
            <Tool w={48} icon={<Stitch split />} lines={[['接合解除', 44]]} />
            <Divider />
            <Tool w={66} icon={<SketchFix />} lines={[['ｽｹｯﾁｬで修正', 62]]} more />
          </RibbonGroup>
          <RibbonGroup $w={110}>
            <Grip />
            <Tool w={35} icon={<Sketcher />} lines={[['ｽｹｯﾁｬ', 30]]} />
            <Tool w={51} icon={<Composite />} lines={[['複合曲線', 46]]} />
          </RibbonGroup>
        </Ribbon>
        <Body>
          <Side>
            <SideTitle>
              <Txt t="ﾌｨｰﾁｬ" w={30} />
              <TitleTools>
                <svg width="9" height="10" viewBox="0 0 9 10" fill="none" stroke="#4b5560"><path d="M2.5 1H6.5M3 1V5.5M6 1V5.5M1 5.5H8M4.5 5.5V9.5" /></svg>
                <Cross s={8} w={1} color="#4b5560" />
              </TitleTools>
            </SideTitle>
            <SearchRow>
              <FilterBox><Txt t="検索" w={24} /><Cross s={8} w={2} color="#444" /></FilterBox>
              <Slot $w={20}><svg width="9" height="13" viewBox="0 0 9 13" fill="none" stroke="#666" strokeWidth="2"><path d="M2 1V9H7M4.500 5.500L8 9L4.500 12.500" /></svg></Slot>
              <Slot $w={30}><svg width="9" height="15" viewBox="0 0 9 15" fill="none" stroke="#8a8a8a" strokeWidth="1.500"><path d="M1 1L7 4L2 5L7 8L2 9L7 13M3 13.500H8V9" /></svg></Slot>
              <Slot $w={19}><svg width="5" height="14" viewBox="0 0 5 14"><path d="M.5 0H4.500L3.500 9H1.500ZM1 11H4V14H1Z" fill="#666" /></svg></Slot>
              <Slot $w={25}><StrongMark><Txt t="S" size={14} /></StrongMark></Slot>
              <Slot $w={23}><svg width="7" height="16" viewBox="0 0 7 16" fill="none" stroke="#777" strokeWidth="1.300"><path d="M3.500 0V3M1 5L3.500 1L6 5V7H1ZM3.500 9V15M1 12L3.500 15L6 12" /></svg></Slot>
            </SearchRow>
            <TreePanel>
              <TreeHead><Txt t="名前" /></TreeHead>
              {tree.map(([t, w, kind, plus], i) => (
                <TreeRow key={t}>
                  <Connector first={i === 0} last={i === tree.length - 1} plus={plus} />
                  <TreeIcon kind={kind} />
                  <TreeLabel><Txt t={t} w={w} /></TreeLabel>
                </TreeRow>
              ))}
            </TreePanel>
          </Side>
          <Viewport>
            <ModelLayer><Model /></ModelLayer>
            <ToolStrips>
              <Strip $w={168} $gap={31}>
                <Slot $w={22}><ClearSel /></Slot><Slot $w={21}><BoxSel /></Slot><Rule $h={18} /><Slot $w={20}><FaceSel /></Slot><Slot $w={9}><DownArrow /></Slot>
                <Slot $w={21}><PickSel /></Slot><Slot $w={9}><DownArrow /></Slot><Slot $w={22}><AddSel /></Slot><Slot $w={9}><DownArrow /></Slot>
                <Slot $w={21}><RectSel /></Slot><Slot $w={9}><DownArrow /></Slot>
              </Strip>
              <Strip $w={213} $gap={30}>
                <Slot $w={24}><BulbIcon /></Slot><Slot $w={19}><BulbIcon lit /></Slot><Slot $w={20}><SwapBulb /></Slot><Slot $w={22}><MotionSmall /></Slot>
                <Slot $w={21}><BulbIcon dim /></Slot><Slot $w={21}><GrayArrow /></Slot><Slot $w={21}><GrayArrow right /></Slot><Rule $h={18} />
                <Slot $w={22}><BlueCube /></Slot><Slot $w={8}><DownArrow /></Slot><Slot $w={22}><PickCube /></Slot><Slot $w={8}><DownArrow /></Slot>
              </Strip>
              <Strip $w={120} $gap={0}>
                <Slot $w={23}><Rotate /></Slot><Slot $w={21}><FilterFace /></Slot><Rule $h={18} /><Slot $w={22}><FilterAxis /></Slot><Rule $h={18} />
                <Slot $w={22}><FilterObj /></Slot><Active><FilterSel /></Active>
              </Strip>
            </ToolStrips>
            <Dialog>
              <DialogTitle>
                <G v={[22, 160, 52, 46]}><path d="M24 164H72" stroke="#444" strokeWidth="5" /><rect x="26" y="170" width="14" height="14" /><rect x="42" y="174" width="13" height="10" fill="#2cae3c" /><rect x="57" y="170" width="14" height="14" /><Cursor x={47} y={178} s={0.65} /></G>
                <Txt t="ﾂｰﾙﾊﾞｰとﾒﾆｭｰのｶｽﾀﾏｲｽﾞ" w={117} />
              </DialogTitle>
              <Tabs>
                <Tab $w={51} $on><Txt t="ｺﾏﾝﾄﾞ" w={32} /></Tab>
                <Tab $w={40}><Txt t="ﾒﾆｭｰ" w={28} /></Tab>
                <Tab $w={54}><Txt t="ﾂｰﾙﾊﾞｰ" w={42} /></Tab>
              </Tabs>
              <TabPage>
                <SearchLine>
                  <SearchField><Txt t="非表示" w={36} /><Slot $w={12}><svg width="11" height="16" viewBox="0 0 11 16"><path d="M1 4L10 13M10 4L1 13" stroke="#6c8fb8" strokeWidth="2" /></svg></Slot></SearchField>
                  <Note><Txt t="このｽﾍﾟｰｽ" w={47} /></Note>
                </SearchLine>
                <CommandGrid>
                  {commands.map(([t, w, icon, key]) => {
                    const on = icon === 'motionall';
                    return (
                      <CommandCell key={t} $on={on}>
                        {commandIcons[icon]}
                        <CommandLabel><Txt t={t} w={w} /></CommandLabel>
                        {key && <Shortcut>{key}</Shortcut>}
                        {on && <KeyRow><KeyInput /><KeyClear $dim><Cross /></KeyClear></KeyRow>}
                      </CommandCell>
                    );
                  })}
                </CommandGrid>
              </TabPage>
            </Dialog>
          </Viewport>
        </Body>
      </Window>
      <Callout>
        <CalloutCell>
          <Motion />
          <CommandLabel><Txt t="動作すべて非表示" w={90} /></CommandLabel>
          <KeyRow><KeyInput>t</KeyInput><KeyClear><Cross /></KeyClear></KeyRow>
        </CalloutCell>
      </Callout>
      <Ghost>
        <Motion ghost />
        <GhostLabel><Txt t="動作すべて非表示" w={89} /></GhostLabel>
        <GhostClear><KeyClear><Cross /></KeyClear></GhostClear>
      </Ghost>
      <DragNote><Txt t="ドラッグ" w={75} size={20} /></DragNote>
      <Markup>
        <svg width="1002" height="645" viewBox="0 0 1002 645" fill="none" stroke="#000" strokeWidth="4" strokeLinecap="round">
          <path d="M720 181L727.500 151L747 174M727.500 151Q732 170 738 190M748 226C760 252 778 278 828 307" />
          <path d="M739 205L746 212M746 205L739 212" strokeWidth="2" />
          <circle cx="729.500" cy="131.500" r="15.500" stroke="#cb2530" strokeWidth="2.800" />
          <path d="M413 251.500H454" stroke="#d9222b" strokeWidth="4.500" />
        </svg>
      </Markup>
    </Page>
  );
}
